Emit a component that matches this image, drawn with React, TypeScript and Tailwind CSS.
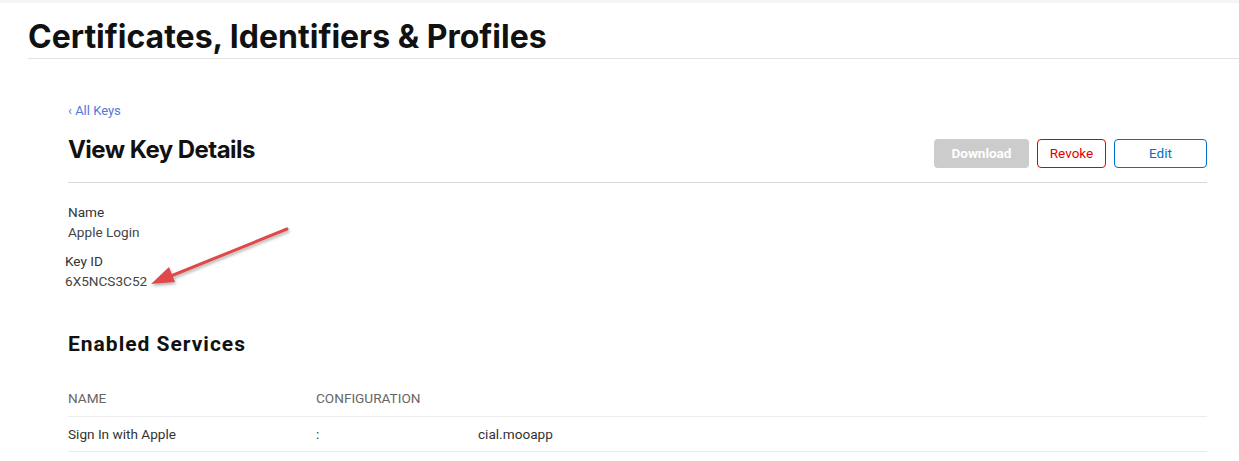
const services = [{ name: 'Sign In with Apple', config: ':', suffix: 'cial.mooapp' }]

function PointerArrow() {
  return (
    <svg className="absolute left-[146px] top-[222px]" width="152" height="70" viewBox="0 0 152 70">
      <defs>
        <filter id="sh" x="-10%" y="-20%" width="130%" height="160%">
          <feDropShadow dx="1" dy="2" stdDeviation="1.5" floodColor="#000" floodOpacity="0.3" />
        </filter>
      </defs>
      <g filter="url(#sh)">
        <line x1="141" y1="7" x2="20" y2="56" stroke="#e04a4a" strokeWidth="3" strokeLinecap="round" />
        <polygon points="5,62 23,45 29,60" fill="#e04a4a" />
      </g>
    </svg>
  )
}

export default function App() {
  return (
    <div className="relative min-h-screen bg-white font-['Roboto',sans-serif] text-[#1d1d1f]">
      <div className="h-[3px] bg-[#f5f5f7]" />
      <div className="pl-[28px]">
        <h1 className="pt-[15px] pb-[2px] font-['Inter',sans-serif] text-[32px] font-bold leading-[38px] text-[#111]">
          Certificates, Identifiers &amp; Profiles
        </h1>
        <div className="h-px bg-[#e2e2e2]" />
      </div>

      <div className="mr-[32px] ml-[68px] pt-[44px]">
        <a className="block text-[13px] leading-[16px] text-[#4d7ad8]">‹&nbsp;All Keys</a>

        <div className="flex items-start justify-between pt-[15px] pb-[14px] border-b border-[#d9d9d9]">
          <h2 className="pt-[1px] font-['Inter',sans-serif] text-[24px] font-bold leading-[30px] tracking-[-0.55px] text-[#111]">
            View Key Details
          </h2>
          <div className="flex gap-[8px] pt-[5px] text-[13.5px]">
            <button className="w-[95px] h-[29px] rounded-[4px] bg-[#cccccc] font-bold text-white">Download</button>
            <button className="w-[69px] h-[29px] rounded-[4px] border border-[#e30000] text-[#e30000]">Revoke</button>
            <button className="w-[93px] h-[29px] rounded-[4px] border border-[#0070c9] text-[#0070c9]">Edit</button>
          </div>
        </div>

        <div className="pt-[19px] text-[13.6px] leading-[20px] text-[#333]">
          <div>Name</div>
          <div className="text-[#444]">Apple Login</div>
          <div className="-ml-[3px] mt-[9px]">Key ID</div>
          <div className="-ml-[3px] text-[#444]">6X5NCS3C52</div>
        </div>

        <h3 className="pt-[39px] text-[21px] font-bold leading-[28px] tracking-[1px] text-[#111]">
          Enabled Services
        </h3>

        <table className="mt-[30px] w-full text-[13.6px] text-[#555]">
          <thead>
            <tr className="border-b border-[#ececec]">
              <th className="w-[248px] pb-[8px] text-left font-normal uppercase text-[#666]">Name</th>
              <th className="pb-[8px] text-left font-normal uppercase text-[#666]">Configuration</th>
            </tr>
          </thead>
          <tbody>
            {services.map((s) => (
              <tr key={s.name} className="border-b border-[#ececec]">
                <td className="h-[35px] pb-[1px] text-[#333]">{s.name}</td>
                <td className="h-[35px] pb-[1px] text-[#333]">
                  <span className="inline-block w-[162px]">{s.config}</span>
                  {s.suffix}
                </td>
              </tr>
            ))}
          </tbody>
        </table>
      </div>

      <PointerArrow />
    </div>
  )
}
